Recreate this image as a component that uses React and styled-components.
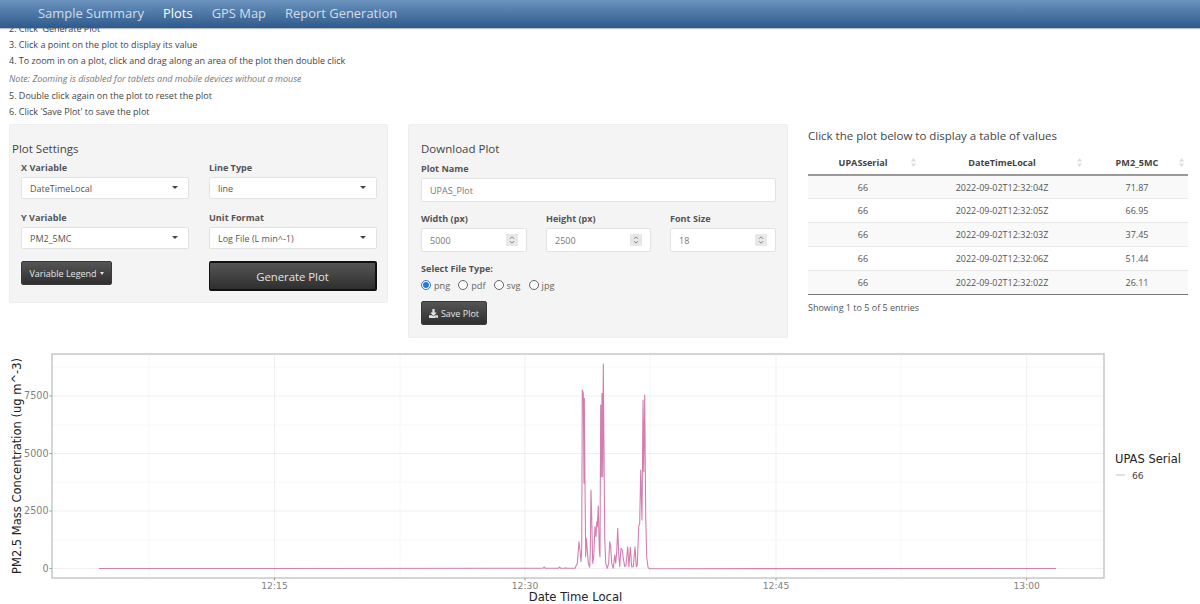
import React from "react";
import styled, { createGlobalStyle } from "styled-components";
import { FaDownload } from "react-icons/fa";

const Global = createGlobalStyle`
  html, body { margin: 0; padding: 0; background: #fff; overflow: hidden; }
  body { font-family: "Open Sans", "Liberation Sans", sans-serif; color: #444; font-size: 9px; }
  * { box-sizing: border-box; }
`;

const Page = styled.div`
  position: relative;
  width: 1200px;
  height: 604px;
  overflow: hidden;
`;
const Navbar = styled.nav`
  position: absolute;
  top: 0;
  left: 0;
  right: 0;
  height: 28px;
  z-index: 5;
  display: flex;
  align-items: center;
  gap: 19px;
  padding: 0 0 2px 38px;
  background: linear-gradient(#6a93bd, #2e5a8c);
  box-shadow: 0 1px 1px rgba(0, 0, 0, .25);
`;
const NavItem = styled.a`
  font-size: 12.95px;
  color: ${(p) => (p.$active ? "#fff" : "#d3dde8")};
  font-weight: ${(p) => (p.$active ? 500 : 400)};
`;
const Steps = styled.div`
  padding: 21px 0 0 9px;
  height: 120px;
`;
const Step = styled.div`
  height: ${(p) => p.$h || 16}px;
  line-height: ${(p) => p.$h || 16}px;
  font-size: 9px;
  color: #444;
`;
const Note = styled(Step)`
  font-style: italic;
  color: #777;
`;
const Columns = styled.div`
  display: grid;
  grid-template-columns: 379px 380px 380px;
  gap: 20px;
  padding: 4px 0 0 9px;
  height: 226px;
  align-items: start;
`;
const Well = styled.section`
  background: #f4f4f4;
  border: 1px solid #eeeeee;
  border-radius: 2px;
  height: ${(p) => p.$h}px;
  padding: ${(p) => p.$pad};
`;
const Heading = styled.h4`
  margin: 0;
  font-size: 11.5px;
  font-weight: 400;
  line-height: 16px;
  color: #444;
`;
const SettingsGrid = styled.div`
  display: grid;
  grid-template-columns: 168px 168px;
  column-gap: 20px;
  margin: 3px 0 0 9px;
`;
const Field = styled.div`
  height: 50px;
`;
const Label = styled.div`
  font-size: 9.1px;
  font-weight: 700;
  color: #555;
  line-height: 15px;
  height: 17px;
  margin-top: ${(p) => p.$top || 0}px;
`;
const Select = styled.div`
  height: 22px;
  width: 100%;
  background: #fff;
  border: 1px solid #e2e2e2;
  border-radius: 2px;
  display: flex;
  align-items: center;
  justify-content: space-between;
  padding: 0 10px 0 8px;
  font-size: 9px;
  color: #555;
  &::after {
    content: "";
    border-left: 3px solid transparent;
    border-right: 3px solid transparent;
    border-top: 3.5px solid #444;
    margin-top: -2px;
  }
`;
const DarkButton = styled.button`
  font-family: inherit;
  background: linear-gradient(#555, #2f2f2f);
  color: #e4e4e4;
  border: 1px solid #3a3a3a;
  border-radius: 2px;
  font-size: 9px;
  padding: 0;
  display: inline-flex;
  align-items: center;
  justify-content: center;
  gap: 3px;
`;
const LegendButton = styled(DarkButton)`
  width: 91px;
  height: 24px;
  margin-top: 1px;
  &::after {
    content: "";
    border-left: 2.5px solid transparent;
    border-right: 2.5px solid transparent;
    border-top: 3px solid #e4e4e4;
    margin-top: 1px;
  }
`;
const GenerateButton = styled(DarkButton)`
  width: 168px;
  height: 30px;
  margin-top: 1px;
  font-size: 11.3px;
  border-top: 2px solid #111;
  border-bottom: 2px solid #111;
  border-left: 1px solid #111;
  border-right: 2px solid #111;
`;
const TextInput = styled.div`
  height: 24px;
  background: #fff;
  border: 1px solid #e2e2e2;
  border-radius: 2px;
  display: flex;
  align-items: center;
  justify-content: space-between;
  padding: 0 8px;
  font-size: 9px;
  color: #777;
`;
const NumberRow = styled.div`
  display: grid;
  grid-template-columns: 106px 105px 106px;
  column-gap: 19px;
  margin-top: 9px;
`;
const Spinner = styled.svg`
  width: 12px;
  height: 12px;
  background: #e8e8e8;
  border-radius: 1px;
`;
const RadioRow = styled.div`
  display: flex;
  align-items: center;
  margin-top: -1px;
  height: 16px;
  font-size: 9.2px;
  color: #666;
`;
const Radio = styled.span`
  width: 10px;
  height: 10px;
  border-radius: 50%;
  border: 1px solid ${(p) => (p.$on ? "#2a78d6" : "#666")};
  background: #fff;
  margin-right: 3px;
  display: inline-flex;
  align-items: center;
  justify-content: center;
  &::after {
    content: "";
    width: 6px;
    height: 6px;
    border-radius: 50%;
    background: ${(p) => (p.$on ? "#2a78d6" : "transparent")};
  }
`;
const RadioText = styled.span`
  margin-right: 8px;
`;
const SaveButton = styled(DarkButton)`
  width: 66px;
  height: 24px;
  margin-top: 8px;
`;
const TableTitle = styled(Heading)`
  margin-top: 4px;
`;
const Table = styled.table`
  margin-top: 5px;
  width: 380px;
  table-layout: fixed;
  border-collapse: collapse;
  font-size: 9px;
  color: #555;
  border-bottom: 1px solid #777;
`;
const Th = styled.th`
  position: relative;
  height: 26px;
  padding: 1px 0 0;
  font-size: 9.1px;
  font-weight: 700;
  color: #444;
  text-align: center;
  border-bottom: 2px solid #9a9a9a;
`;
const SortIcon = styled.svg`
  position: absolute;
  right: ${(p) => p.$r}px;
  top: 9px;
  width: 5px;
  height: 9px;
`;
const Tr = styled.tr`
  background: ${(p) => (p.$odd ? "#f9f9f9" : "#fff")};
`;
const Td = styled.td`
  height: 23.9px;
  padding: 0;
  text-align: center;
  border-top: 1px solid #e8e8e8;
`;
const Info = styled.div`
  margin-top: 6px;
  font-size: 9px;
  color: #555;
  line-height: 14px;
`;
const Chart = styled.svg`
  display: block;
  width: 1200px;
  height: 258px;
`;

const zoomTrace = [[0,655],[10,654],[13,651],[16,655],[55,655],[59,651],[62,655],[75,655],[78,653],[80,655],[105,655],[112,640],[117,575],[120,600],[123,635],[125,600],[127,120],[130,130],[132,400],[133,145],[135,405],[137,620],[139,565],[141,590],[145,640],[149,652],[151,600],[153,420],[155,500],[158,640],[161,620],[165,530],[168,560],[170,515],[172,530],[175,468],[178,600],[180,620],[182,165],[184,380],[186,130],[188,380],[190,42],[192,300],[194,560],[197,640],[202,655],[206,640],[209,575],[212,590],[215,640],[220,655],[224,615],[227,640],[230,605],[233,535],[236,610],[239,650],[243,595],[247,600],[250,625],[254,650],[258,645],[263,590],[267,650],[271,592],[275,650],[280,650],[285,590],[289,650],[292,645],[296,530],[299,520],[302,360],[306,510],[309,150],[311,365],[314,135],[317,500],[320,620],[324,652],[328,656],[390,656]];
const tracePoints = [
  "99,568.5",
  ...zoomTrace.map(([x, y]) => `${(540 + x / 3).toFixed(1)},${(350 + y / 3).toFixed(1)}`),
  "1056,568.5",
].join(" ");

const rows = [
  ["66", "2022-09-02T12:32:04Z", "71.87"],
  ["66", "2022-09-02T12:32:05Z", "66.95"],
  ["66", "2022-09-02T12:32:03Z", "37.45"],
  ["66", "2022-09-02T12:32:06Z", "51.44"],
  ["66", "2022-09-02T12:32:02Z", "26.11"],
];
const yTicks = [[568.5, "0"], [511, "2500"], [453.5, "5000"], [396, "7500"]];
const yMinor = [540, 482, 425, 367];
const xTicks = [[274.5, "12:15"], [525, "12:30"], [776, "12:45"], [1026.7, "13:00"]];
const xMinor = [149, 400, 650, 901];

const Sort = ({ r }) => (
  <SortIcon $r={r} viewBox="0 0 5 9">
    <path d="M2.5 0 5 3.6H0zM2.5 9 0 5.4h5z" fill="#ddd" />
  </SortIcon>
);
const Spin = () => (
  <Spinner viewBox="0 0 12 12">
    <path d="M4 4.8 6 2.8l2 2M4 7.2l2 2 2-2" fill="none" stroke="#777" strokeWidth=".9" />
  </Spinner>
);

export default function App() {
  return (
    <Page>
      <Global />
      <Navbar>
        <NavItem>Sample Summary</NavItem>
        <NavItem $active>Plots</NavItem>
        <NavItem>GPS Map</NavItem>
        <NavItem>Report Generation</NavItem>
      </Navbar>
      <Steps>
        <Step>2. Click 'Generate Plot'</Step>
        <Step>3. Click a point on the plot to display its value</Step>
        <Step>4. To zoom in on a plot, click and drag along an area of the plot then double click</Step>
        <Note $h={19}>Note: Zooming is disabled for tablets and mobile devices without a mouse</Note>
        <Step>5. Double click again on the plot to reset the plot</Step>
        <Step>6. Click 'Save Plot' to save the plot</Step>
      </Steps>
      <Columns>
        <Well $h={179} $pad="16px 10px 0 2px">
          <Heading>Plot Settings</Heading>
          <SettingsGrid>
            <Field><Label>X Variable</Label><Select>DateTimeLocal</Select></Field>
            <Field><Label>Line Type</Label><Select>line</Select></Field>
            <Field><Label>Y Variable</Label><Select>PM2_5MC</Select></Field>
            <Field><Label>Unit Format</Label><Select>Log File (L min^-1)</Select></Field>
            <div><LegendButton>Variable Legend</LegendButton></div>
            <div><GenerateButton>Generate Plot</GenerateButton></div>
          </SettingsGrid>
        </Well>
        <Well $h={214} $pad="16px 11px 0 12px">
          <Heading>Download Plot</Heading>
          <Label $top={4}>Plot Name</Label>
          <TextInput>UPAS_Plot</TextInput>
          <NumberRow>
            <div><Label>Width (px)</Label><TextInput>5000<Spin /></TextInput></div>
            <div><Label>Height (px)</Label><TextInput>2500<Spin /></TextInput></div>
            <div><Label>Font Size</Label><TextInput>18<Spin /></TextInput></div>
          </NumberRow>
          <Label $top={9}>Select File Type:</Label>
          <RadioRow>
            <Radio $on /><RadioText>png</RadioText>
            <Radio /><RadioText>pdf</RadioText>
            <Radio /><RadioText>svg</RadioText>
            <Radio /><RadioText>jpg</RadioText>
          </RadioRow>
          <SaveButton><FaDownload size={9} />Save Plot</SaveButton>
        </Well>
        <div>
          <TableTitle>Click the plot below to display a table of values</TableTitle>
          <Table>
            <colgroup>
              <col width="110" />
              <col width="168" />
              <col width="102" />
            </colgroup>
            <thead>
              <tr>
                <Th>UPASserial<Sort r={2.5} /></Th>
                <Th>DateTimeLocal<Sort r={4.5} /></Th>
                <Th>PM2_5MC<Sort r={4.5} /></Th>
              </tr>
            </thead>
            <tbody>
              {rows.map((r, i) => (
                <Tr key={r[1]} $odd={i % 2 === 0}>
                  {r.map((c, j) => <Td key={j}>{c}</Td>)}
                </Tr>
              ))}
            </tbody>
          </Table>
          <Info>Showing 1 to 5 of 5 entries</Info>
        </div>
      </Columns>
      <Chart viewBox="0 346 1200 258" fontFamily="'DejaVu Sans', sans-serif">
        {yMinor.map((y) => <line key={y} x1="53" x2="1103" y1={y} y2={y} stroke="#f6f6f6" />)}
        {xMinor.map((x) => <line key={x} x1={x} x2={x} y1="355" y2="577" stroke="#f6f6f6" />)}
        {yTicks.map(([y]) => <line key={y} x1="53" x2="1103" y1={y} y2={y} stroke="#efefef" />)}
        {xTicks.map(([x]) => <line key={x} x1={x} x2={x} y1="355" y2="577" stroke="#efefef" />)}
        <polyline points={tracePoints} fill="none" stroke="#d27fb0" strokeWidth="1.1" strokeLinejoin="round" />
        <rect x="52" y="354" width="1052" height="224" fill="none" stroke="#c4c4c4" strokeWidth="1.4" />
        {yTicks.map(([y, t]) => (
          <g key={t}>
            <line x1="49.5" x2="52" y1={y} y2={y} stroke="#888" strokeWidth=".8" />
            <text x="48.5" y={y + 3.4} textAnchor="end" fontSize="9.6" fill="#7f7f7f">{t}</text>
          </g>
        ))}
        {xTicks.map(([x, t]) => (
          <g key={t}>
            <line x1={x} x2={x} y1="578" y2="580.5" stroke="#888" strokeWidth=".8" />
            <text x={x} y="589" textAnchor="middle" fontSize="9.2" fill="#7f7f7f">{t}</text>
          </g>
        ))}
        <text x="575.5" y="601" textAnchor="middle" fontSize="11.6" fill="#222">Date Time Local</text>
        <text transform="translate(20.5 466) rotate(-90)" textAnchor="middle" fontSize="11.5" fill="#222">PM2.5 Mass Concentration (ug m^-3)</text>
        <text x="1115" y="463" fontSize="11.5" fill="#222">UPAS Serial</text>
        <line x1="1116" x2="1125" y1="475" y2="475" stroke="#d6b8c8" strokeWidth="1" />
        <text x="1132" y="478.5" fontSize="9.2" fill="#444">66</text>
      </Chart>
    </Page>
  );
}
